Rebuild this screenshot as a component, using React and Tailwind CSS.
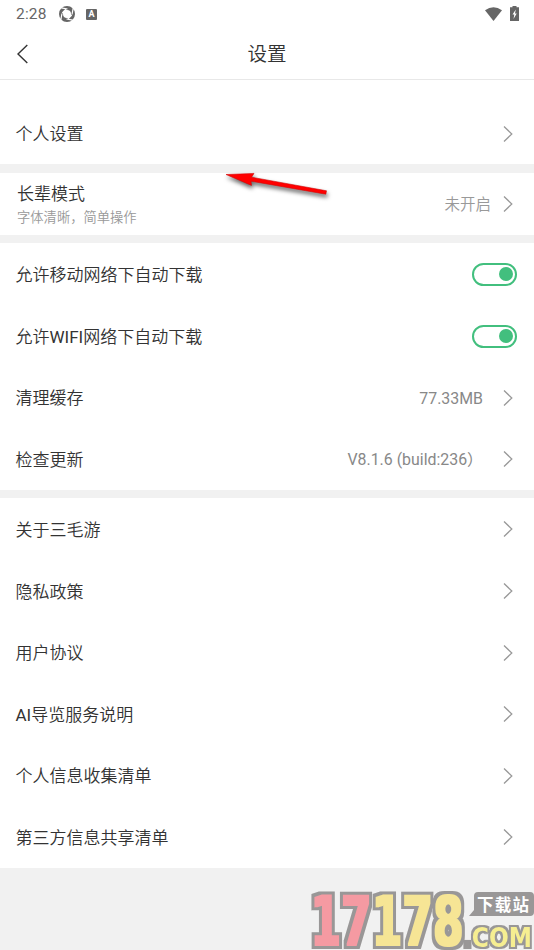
import React from 'react';

const Chevron = () => (
  <svg className="h-[18px] w-3 shrink-0" viewBox="0 0 12 18" fill="none" stroke="#999999" strokeWidth="1.3" aria-hidden>
    <path d="M2 1.5 9.8 9 2 16.5" />
  </svg>
);

const Toggle = () => (
  <button
    type="button"
    role="switch"
    aria-checked="true"
    className="flex h-[23px] w-[45px] items-center justify-end rounded-full border-2 border-[#42bf7e] bg-white pr-[2.5px]"
  >
    <span className="size-[14px] rounded-full bg-[#42bf7e]" />
  </button>
);

const Row = ({ label, value, toggle, className = 'h-[61.6px] pt-px' }) => (
  <div className={`flex items-center justify-between pl-[15.5px] ${toggle ? 'pr-[17px]' : 'pr-5'} ${className}`}>
    <span className="pt-px text-[17px] leading-6 text-[#333333]">{label}</span>
    {toggle ? (
      <Toggle />
    ) : (
      <div className="flex items-center gap-[19px]">
        {value ? <span className="pt-[2px] text-[15.9px] leading-6 font-normal text-[#888888]">{value}</span> : null}
        <Chevron />
      </div>
    )}
  </div>
);

const StatusBar = () => (
  <div className="flex h-7 items-center justify-between pr-[15px] pl-4 font-normal text-[#666666]">
    <div className="flex items-center">
      <span className="w-[43px] text-[15.5px] leading-7 tracking-[0.2px]">2:28</span>
      <svg className="size-4" viewBox="0 0 16 16" aria-hidden>
        <circle cx="8" cy="8" r="6" fill="none" stroke="currentColor" strokeWidth="4" />
        <path d="M8.5 3 2.2 1.8M13 8.5 14.2 2.2M7.5 13 13.8 14.2M3 7.5 1.8 13.8" stroke="#ffffff" strokeWidth="1.2" />
        <path d="M6.5 2.8 13.2 9.5 9.5 13.2 2.8 6.5Z" fill="#ffffff" />
      </svg>
      <span className="ml-[11px] flex size-[11px] items-center justify-center rounded-[1px] bg-[#666666] text-[9px] leading-none font-bold text-white">
        A
      </span>
    </div>
    <div className="flex items-center gap-2">
      <svg className="h-[15px] w-[17px]" viewBox="0 0 17 15" fill="currentColor" aria-hidden>
        <path d="M0 3.2Q8.5-2.8 17 3.2L8.5 14Z" />
      </svg>
      <svg className="mb-[2px] h-[15px] w-[9px]" viewBox="0 0 9 15" aria-hidden>
        <path d="M2.5 0h4v1.3H9V15H0V1.3h2.5Z" fill="currentColor" />
        <path d="M5.8 3.5 2.5 8.5h1.8L3.5 13 6.7 7.5H5Z" fill="#ffffff" />
      </svg>
    </div>
  </div>
);

const Arrow = () => (
  <svg
    className="pointer-events-none absolute top-[165px] left-[220px] h-10 w-[116px] drop-shadow-[1px_3px_2px_rgba(0,0,0,0.6)]"
    viewBox="0 0 116 40"
    aria-hidden
  >
    <path d="M6 9.5 34 8.4 31.5 12.2 106.5 25.8 105.8 29.2 31 16.2 31.5 20.4Z" fill="#ff0000" stroke="#d00808" strokeWidth=".6" />
  </svg>
);

// The morphology filters thicken the letters and square off their outline.
const Watermark = () => (
  <svg
    className="absolute right-0 bottom-0 h-[66px] w-[229px]"
    viewBox="305 884 229 66"
    fontFamily="'DejaVu Sans', sans-serif"
    fontWeight="700"
    aria-hidden
  >
    <defs>
      <filter id="block" filterUnits="userSpaceOnUse" x="300" y="880" width="234" height="80" colorInterpolationFilters="sRGB">
        <feMorphology in="SourceGraphic" operator="dilate" radius="1" result="face" />
        <feMorphology in="SourceAlpha" operator="dilate" radius="4" result="edge" />
        <feFlood floodColor="#999797" />
        <feComposite in2="edge" operator="in" result="border" />
        <feMerge>
          <feMergeNode in="border" />
          <feMergeNode in="face" />
        </feMerge>
      </filter>
      <filter id="block-small" filterUnits="userSpaceOnUse" x="440" y="900" width="94" height="60" colorInterpolationFilters="sRGB">
        <feMorphology in="SourceAlpha" operator="dilate" radius="2" result="edge" />
        <feFlood floodColor="#999797" />
        <feComposite in2="edge" operator="in" result="border" />
        <feMerge>
          <feMergeNode in="border" />
          <feMergeNode in="SourceGraphic" />
        </feMerge>
      </filter>
    </defs>
    <text x="310.5" y="944.5" fontSize="68" textLength="153" lengthAdjust="spacingAndGlyphs" fill="#f59aa2" filter="url(#block)">
      17<tspan fill="#f6e595">178</tspan>
    </text>
    <path d="M478 892h52q4 0 4 4v16q0 4-4 4h-61l5-6v-14q0-4 4-4Z" fill="#999797" />
    <text x="477" y="910.5" fontSize="16.5" textLength="52" fill="#ffffff" fontFamily="'Noto Sans CJK SC', sans-serif">下载站</text>
    <text x="463" y="946.5" fontSize="26" textLength="69" lengthAdjust="spacingAndGlyphs" fill="#f6ee91" filter="url(#block-small)">
      <tspan fill="#999797">.</tspan>COM
    </text>
  </svg>
);

const App = () => (
  <div className="relative flex h-[950px] w-[534px] flex-col overflow-hidden bg-[#f1f1f1] font-[Roboto,'Noto_Sans_CJK_SC',sans-serif] font-[350]">
    <header className="h-20 shrink-0 border-b border-[#e8e8e8] bg-white">
      <StatusBar />
      <div className="grid h-[51px] grid-cols-[1fr_auto_1fr] items-center">
        <svg className="ml-4 h-5 w-3" viewBox="0 0 12 20" fill="none" stroke="#333333" strokeWidth="1.4" aria-hidden>
          <path d="M11.3 1 2 10l9.3 9" />
        </svg>
        <h1 className="pt-[2px] text-[19.5px] leading-7 text-[#333333]">设置</h1>
      </div>
    </header>

    <main className="flex flex-col gap-[8.6px]">
      <section className="bg-white pt-[23px]">
        <Row label="个人设置" className="h-[61px]" />
      </section>

      <section className="flex h-[62px] items-center justify-between bg-white pr-5 pl-[17px]">
        <div className="flex flex-col pt-[3px]">
          <span className="text-[17px] leading-6 text-[#333333]">长辈模式</span>
          <span className="text-[13.3px] leading-[23px] text-[#999999]">字体清晰，简单操作</span>
        </div>
        <div className="flex items-center gap-[11px]">
          <span className="pt-[2px] text-[15.5px] leading-6 text-[#999999]">未开启</span>
          <Chevron />
        </div>
      </section>

      <section className="bg-white">
        <Row label="允许移动网络下自动下载" toggle />
        <Row label={<>允许<span className="font-normal">WIFI</span>网络下自动下载</>} toggle />
        <Row label="清理缓存" value="77.33MB" />
        <Row label="检查更新" value="V8.1.6 (build:236）" />
      </section>

      <section className="bg-white">
        <Row label="关于三毛游" />
        <Row label="隐私政策" />
        <Row label="用户协议" />
        <Row label={<><span className="font-normal">AI</span>导览服务说明</>} />
        <Row label="个人信息收集清单" />
        <Row label="第三方信息共享清单" />
      </section>
    </main>

    <Arrow />
    <Watermark />
  </div>
);

export default App;
